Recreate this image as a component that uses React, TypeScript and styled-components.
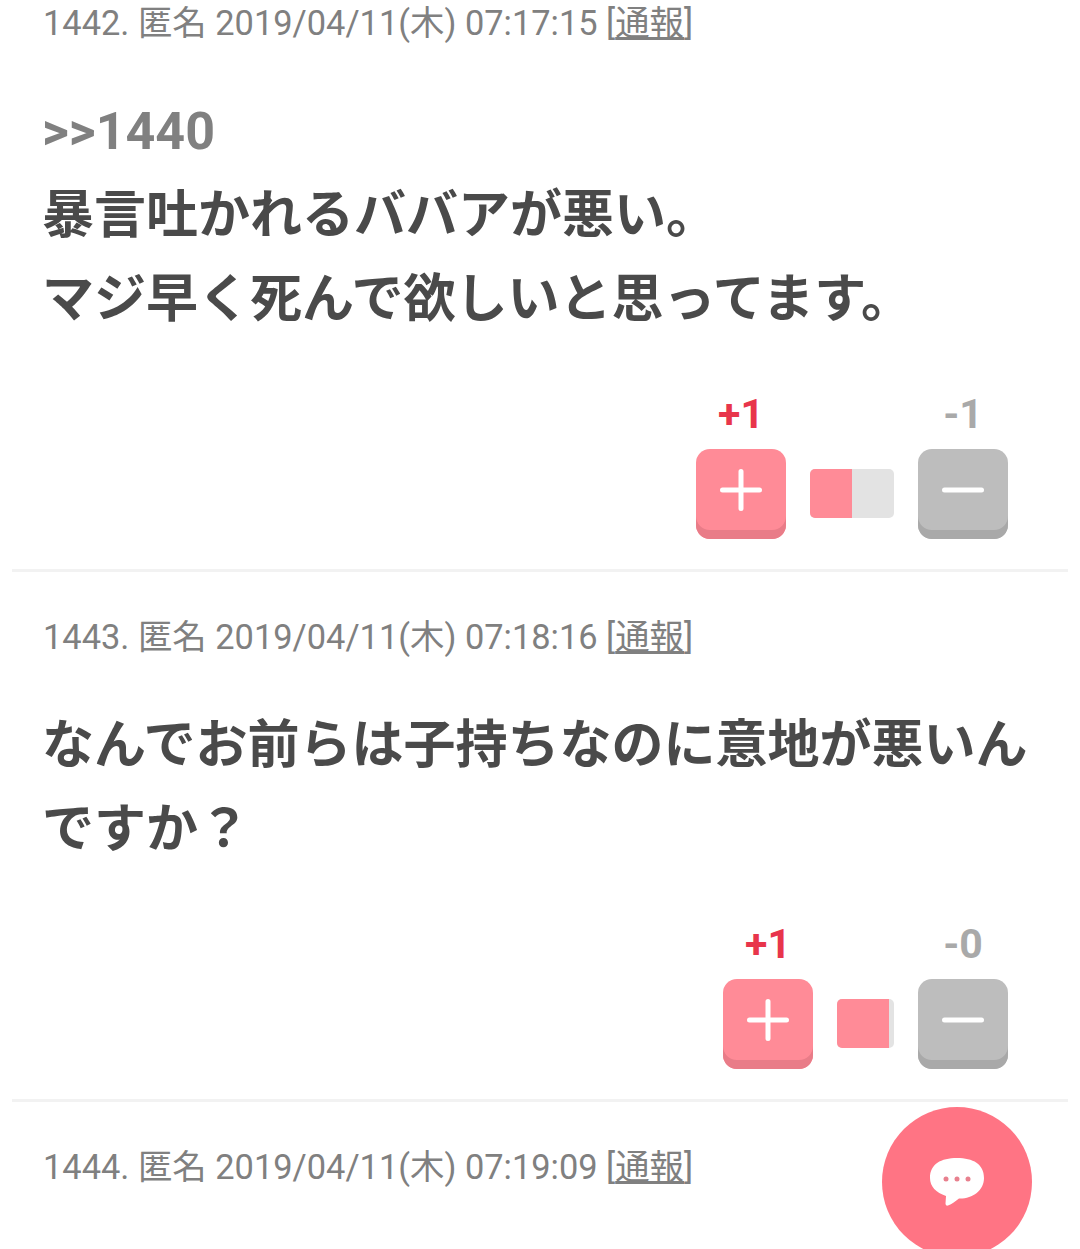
import React from "react";
import styled, { createGlobalStyle } from "styled-components";

const GlobalStyle = createGlobalStyle`
  html, body {
    margin: 0;
    padding: 0;
    background: #fff;
  }
  body {
    font-family: Roboto, "Noto Sans CJK JP", sans-serif;
  }
`;

const Screen = styled.div`
  position: relative;
  width: 1080px;
  height: 1249px;
  overflow: hidden;
`;

const List = styled.div`
  margin-top: -42px;
  padding: 0 12px;
`;

const Comment = styled.article`
  padding: 43px 0 30px;
  border-bottom: 3px solid #f2f2f2;

  &:last-child {
    border-bottom: none;
  }
`;

const Meta = styled.div`
  padding-left: 31px;
  height: 44px;
  font-size: 34.4px;
  line-height: 44px;
  color: #808080;
  white-space: nowrap;
`;

const Report = styled.span`
  text-decoration: underline;
  text-underline-offset: 2px;
`;

const Body = styled.div`
  margin-top: 45px;
  padding-left: 30px;
  font-size: 52px;
  font-weight: 700;
  line-height: 84px;
  color: #4a4a4a;
`;

const Anchor = styled.div`
  color: #808080;
`;

const Votes = styled.div`
  display: flex;
  justify-content: flex-end;
  align-items: flex-end;
  margin-top: 51px;
  padding-right: 60px;
`;

const VoteColumn = styled.div`
  display: flex;
  flex-direction: column;
  align-items: center;
  width: 90px;
`;

const Count = styled.div<{ $up?: boolean }>`
  height: 56px;
  font-size: 41px;
  line-height: 43px;
  font-weight: 700;
  color: ${({ $up }) => ($up ? "#e8354b" : "#a9a9a9")};
`;

const VoteButton = styled.div<{ $up?: boolean }>`
  display: flex;
  align-items: center;
  justify-content: center;
  box-sizing: border-box;
  width: 90px;
  height: 90px;
  padding-bottom: 8px;
  border-radius: 14px;
  background: ${({ $up }) => ($up ? "#ff8b97" : "#bdbdbd")};
  box-shadow: inset 0 -9px 0 ${({ $up }) => ($up ? "#e97c88" : "#a9a9a9")};
`;

const Ratio = styled.div<{ $width: number }>`
  display: flex;
  width: ${({ $width }) => $width}px;
  height: 49px;
  margin: 0 24px 21px;
  border-radius: 5px;
  overflow: hidden;
  background: #e3e3e3;
`;

const RatioFill = styled.div`
  background: #ff8b97;
`;

const Fab = styled.div`
  position: absolute;
  left: 882px;
  top: 1107px;
  display: flex;
  align-items: center;
  justify-content: center;
  width: 150px;
  height: 150px;
  border-radius: 50%;
  background: #ff7484;
`;

const PlusIcon = () => (
  <svg width="44" height="44" viewBox="0 0 44 44">
    <path d="M22 3.500v37M3.500 22h37" stroke="#fff" strokeWidth="5" strokeLinecap="round" />
  </svg>
);

const MinusIcon = () => (
  <svg width="44" height="44" viewBox="0 0 44 44">
    <path d="M3.500 22h37" stroke="#fff" strokeWidth="5" strokeLinecap="round" />
  </svg>
);

const ChatIcon = () => (
  <svg width="54" height="48" viewBox="0 0 54 48">
    <path
      d="M27 0c16 0 27 6 27 20 0 13-12 21-25 20.500-3.500 2.500-7 5.500-11 7-1.500.5-2.500-.5-2.500-2l.5-7.500C6 34.500 0 28.500 0 20 0 6 11 0 27 0z"
      fill="#fff"
    />
    <circle cx="16" cy="21" r="2.500" fill="#e8808e" />
    <circle cx="27" cy="21" r="2.500" fill="#e8808e" />
    <circle cx="38" cy="21" r="2.500" fill="#e8808e" />
  </svg>
);

type Item = {
  no: number;
  time: string;
  lines: string[];
  anchor?: string;
  up?: number;
  down?: number;
  barWidth?: number;
  fill?: number;
};

const items: Item[] = [
  {
    no: 1442,
    time: "07:17:15",
    anchor: ">>1440",
    lines: ["暴言吐かれるババアが悪い。", "マジ早く死んで欲しいと思ってます。"],
    up: 1,
    down: 1,
    barWidth: 84,
    fill: 42,
  },
  {
    no: 1443,
    time: "07:18:16",
    lines: ["なんでお前らは子持ちなのに意地が悪いん", "ですか？"],
    up: 1,
    down: 0,
    barWidth: 57,
    fill: 52,
  },
  { no: 1444, time: "07:19:09", lines: [] },
];

export default function App() {
  return (
    <Screen>
      <GlobalStyle />
      <List>
        {items.map((item) => (
          <Comment key={item.no}>
            <Meta>
              {item.no}. 匿名 2019/04/11(木) {item.time} [<Report>通報</Report>]
            </Meta>
            {item.lines.length > 0 && (
              <>
                <Body>
                  {item.anchor && <Anchor>{item.anchor}</Anchor>}
                  {item.lines.map((line) => (
                    <div key={line}>{line}</div>
                  ))}
                </Body>
                <Votes>
                  <VoteColumn>
                    <Count $up>+{item.up}</Count>
                    <VoteButton $up>
                      <PlusIcon />
                    </VoteButton>
                  </VoteColumn>
                  <Ratio $width={item.barWidth ?? 0}>
                    <RatioFill style={{ width: item.fill }} />
                  </Ratio>
                  <VoteColumn>
                    <Count>-{item.down}</Count>
                    <VoteButton>
                      <MinusIcon />
                    </VoteButton>
                  </VoteColumn>
                </Votes>
              </>
            )}
          </Comment>
        ))}
      </List>
      <Fab>
        <ChatIcon />
      </Fab>
    </Screen>
  );
}
